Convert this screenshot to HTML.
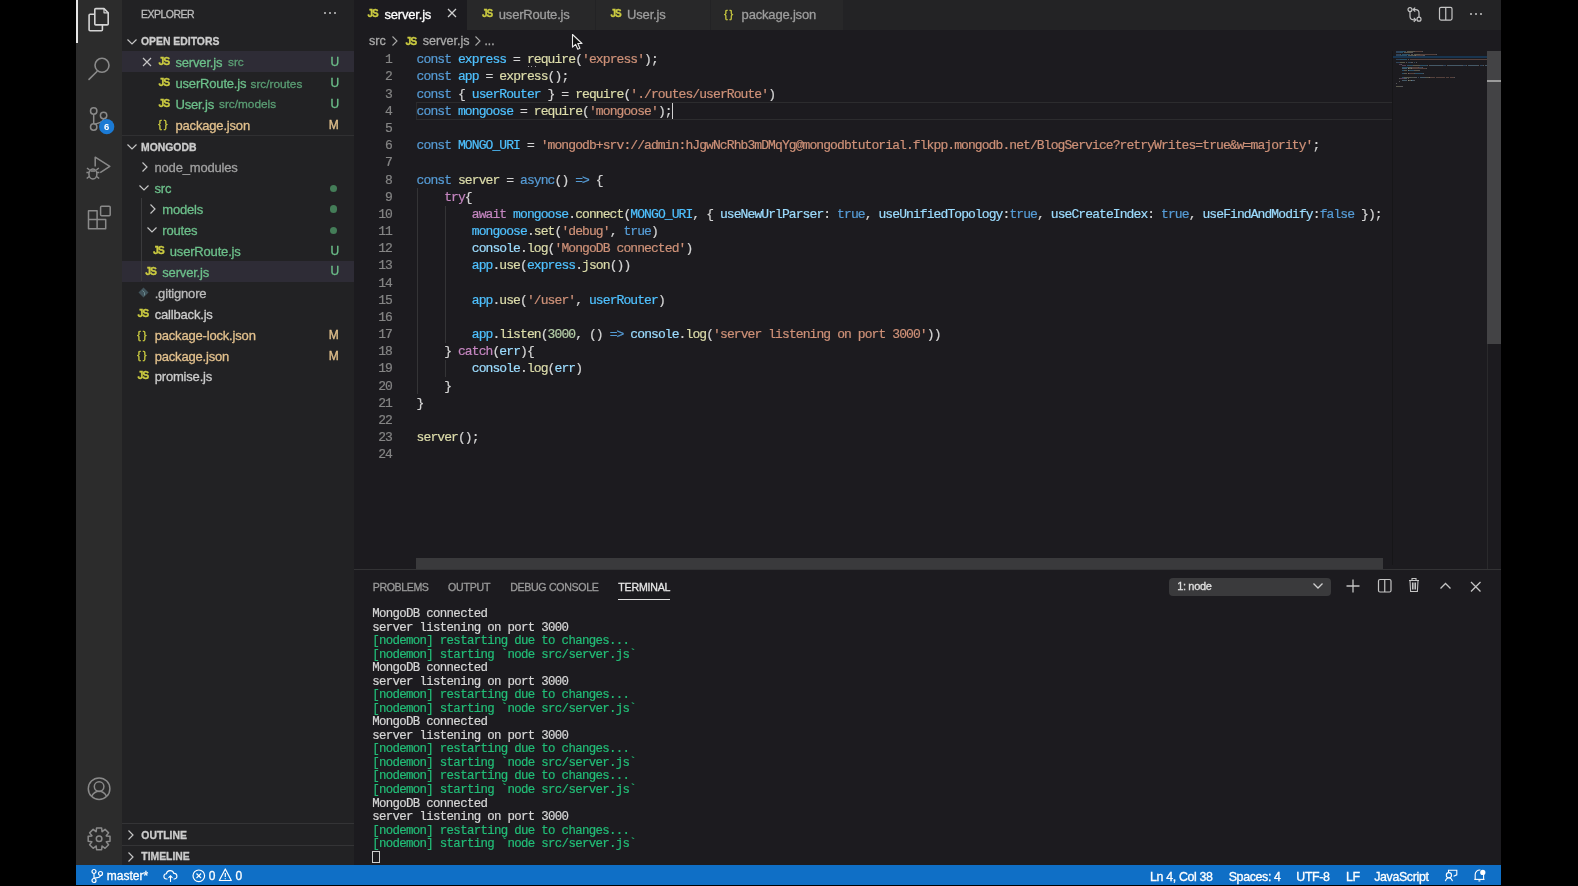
<!DOCTYPE html>
<html><head><meta charset="utf-8"><style>
*{margin:0;padding:0;box-sizing:border-box}
html,body{width:1578px;height:886px;overflow:hidden;background:#000}
body{position:relative;will-change:transform;font-family:"Liberation Sans",sans-serif}
.a{position:absolute}
.ui{font-family:"Liberation Sans",sans-serif;white-space:pre;-webkit-text-stroke-width:0.3px}
.mono{font-family:"Liberation Mono",monospace;white-space:pre;-webkit-text-stroke-width:0.2px}
.kw{color:#569cd6} .var{color:#4fc1ff} .prop{color:#9cdcfe} .fn{color:#dcdcaa}
.str{color:#ce9178} .ctrl{color:#c586c0} .num{color:#b5cea8} .pun{color:#d4d4d4}
.js{font-family:"Liberation Sans",sans-serif;font-weight:bold;color:#cbcb41;font-size:9px;letter-spacing:-0.3px}
</style></head>
<body>
<div class="a" style="left:76px;top:0px;width:46px;height:865px;background:#2c2c2c;"></div><div class="a" style="left:76px;top:0px;width:2px;height:43px;background:#e8e8e8;"></div><div class="a" style="left:122px;top:0px;width:232px;height:865px;background:#222224;"></div><div class="a" style="left:354px;top:0px;width:1147px;height:865px;background:#1c1b1f;"></div><div class="a" style="left:76px;top:865px;width:1425px;height:20px;background:#0f6fc6;"></div><svg class="a" style="left:76px;top:0px;" width="46" height="43" viewBox="0 0 46 43"><g fill="none" stroke="#d4d4d4" stroke-width="1.6" stroke-linejoin="round">
<path d="M19.8 8.6 h8.2 l4.2 4.2 v11.1 a1 1 0 0 1 -1 1 h-11.4 a1 1 0 0 1 -1 -1 v-14.3 a1 1 0 0 1 1 -1 z"/>
<path d="M18.8 14.3 h-4.7 a1 1 0 0 0 -1 1 v14.4 a1 1 0 0 0 1 1 h11.3 a1 1 0 0 0 1 -1 v-4.8"/>
<path d="M28 8.6 v4.2 h4.2" stroke-width="1.2"/>
</g></svg><svg class="a" style="left:76px;top:45px;" width="46" height="45" viewBox="0 0 46 45"><g fill="none" stroke="#8a8a8a" stroke-width="1.6">
<circle cx="26" cy="20.3" r="7"/><path d="M21 26.5 L13 34.4" stroke-linecap="round"/></g></svg><svg class="a" style="left:76px;top:95px;" width="46" height="45" viewBox="0 0 46 45"><g fill="none" stroke="#8a8a8a" stroke-width="1.5">
<circle cx="17.7" cy="16" r="3.2"/><circle cx="27.6" cy="20.5" r="3.2"/><circle cx="17.7" cy="32" r="3.2"/>
<path d="M17.7 19.2 V28.8"/><path d="M27.6 23.7 c0 4 -6 4 -9 6"/></g>
<circle cx="30.7" cy="31.7" r="7.6" fill="#1b7ad4"/>
<text x="30.7" y="35.2" font-family="Liberation Sans" font-weight="bold" font-size="9.5" fill="#fff" text-anchor="middle">6</text></svg><svg class="a" style="left:76px;top:145px;" width="46" height="45" viewBox="0 0 46 45"><g fill="none" stroke="#8a8a8a" stroke-width="1.5" stroke-linejoin="round">
<path d="M19.2 21.5 V12.2 L33.8 21.4 L24.2 27.6"/>
<ellipse cx="16.9" cy="29" rx="4" ry="5"/><path d="M12.9 27.5 h-2.5 M20.9 27.5 h2.5 M13.2 31.5 l-2.5 2 M20.6 31.5 l2.5 2 M13.5 25 l-2.5 -2 M20.3 25 l2.5 -2 M14.5 26 h4.8"/></g></svg><svg class="a" style="left:76px;top:200px;" width="46" height="35" viewBox="0 0 46 35"><g fill="none" stroke="#8a8a8a" stroke-width="1.5" stroke-linejoin="round">
<path d="M12.5 10.8 h8.6 v8.6 h8.6 v9.4 h-17.2 z M12.5 19.4 h8.6 v9.4"/>
<rect x="24.6" y="6.2" width="9.6" height="9.6" rx="1"/></g></svg><svg class="a" style="left:76px;top:765px;" width="46" height="48" viewBox="0 0 46 48"><g fill="none" stroke="#8a8a8a" stroke-width="1.5">
<circle cx="23.1" cy="23.7" r="10.8"/><circle cx="23.1" cy="21.6" r="4.8"/>
<path d="M15.6 31.3 c2 -3.5 4.5 -5 7.5 -5 c3 0 5.5 1.5 7.5 5"/></g></svg><svg class="a" style="left:76px;top:815px;" width="46" height="48" viewBox="0 0 46 48"><g fill="none" stroke="#8a8a8a" stroke-width="1.5" stroke-linejoin="round">
<path d="M34.01 21.28 L34.01 26.32 L30.33 26.72 L30.28 26.85 L32.60 29.74 L29.04 33.30 L26.15 30.98 L26.02 31.03 L25.62 34.71 L20.58 34.71 L20.18 31.03 L20.05 30.98 L17.16 33.30 L13.60 29.74 L15.92 26.85 L15.87 26.72 L12.19 26.32 L12.19 21.28 L15.87 20.88 L15.92 20.75 L13.60 17.86 L17.16 14.30 L20.05 16.62 L20.18 16.57 L20.58 12.89 L25.62 12.89 L26.02 16.57 L26.15 16.62 L29.04 14.30 L32.60 17.86 L30.28 20.75 L30.33 20.88Z"/><circle cx="23.1" cy="23.8" r="2.8"/></g></svg><div class="a ui" style="left:141px;top:8.72px;font-size:10.5px;line-height:10.5px;color:#bbbbbb;letter-spacing:-0.5px">EXPLORER</div><div class="a" style="left:323.5px;top:12.2px;width:2px;height:2px;background:#c5c5c5;border-radius:1px"></div><div class="a" style="left:328.5px;top:12.2px;width:2px;height:2px;background:#c5c5c5;border-radius:1px"></div><div class="a" style="left:333.5px;top:12.2px;width:2px;height:2px;background:#c5c5c5;border-radius:1px"></div><svg class="a" style="left:125.5px;top:35.5px;" width="12" height="12" viewBox="0 0 12 12"><path d="M1.5 3.5 L6 8 L10.5 3.5" fill="none" stroke="#c5c5c5" stroke-width="1.2"/></svg><div class="a ui" style="left:141px;top:36.97px;font-size:10.4px;line-height:10.4px;color:#cccccc;font-weight:bold;">OPEN EDITORS</div><div class="a" style="left:122px;top:51px;width:232px;height:21.4px;background:#2e2c36;"></div><svg class="a" style="left:141px;top:56px;" width="12" height="12" viewBox="0 0 12 12"><path d="M2 2 L10 10 M10 2 L2 10" stroke="#c5c5c5" stroke-width="1.2"/></svg><div class="a ui" style="left:158.5px;top:55.72px;font-size:10.5px;line-height:10.5px;color:#cbcb41;font-weight:bold;letter-spacing:-1px">JS</div><div class="a ui" style="left:175.5px;top:56.27px;font-size:13px;line-height:13px;color:#6cbf8a;letter-spacing:-0.18px">server.js</div><div class="a ui" style="left:330.5px;top:55.77px;font-size:12px;line-height:12px;color:#6cbf8a;">U</div><div class="a ui" style="left:158.5px;top:76.92px;font-size:10.5px;line-height:10.5px;color:#cbcb41;font-weight:bold;letter-spacing:-1px">JS</div><div class="a ui" style="left:175.5px;top:77.47px;font-size:13px;line-height:13px;color:#6cbf8a;letter-spacing:-0.18px">userRoute.js</div><div class="a ui" style="left:330.5px;top:76.97px;font-size:12px;line-height:12px;color:#6cbf8a;">U</div><div class="a ui" style="left:158.5px;top:97.72px;font-size:10.5px;line-height:10.5px;color:#cbcb41;font-weight:bold;letter-spacing:-1px">JS</div><div class="a ui" style="left:175.5px;top:98.27px;font-size:13px;line-height:13px;color:#6cbf8a;letter-spacing:-0.18px">User.js</div><div class="a ui" style="left:330.5px;top:97.77px;font-size:12px;line-height:12px;color:#6cbf8a;">U</div><div class="a ui" style="left:158px;top:118.82px;font-size:11.5px;line-height:11.5px;color:#cbcb41;letter-spacing:-0.6px">{ }</div><div class="a ui" style="left:175.5px;top:119.07px;font-size:13px;line-height:13px;color:#e2c08d;letter-spacing:-0.18px">package.json</div><div class="a ui" style="left:328.7px;top:118.57px;font-size:12px;line-height:12px;color:#e2c08d;">M</div><div class="a ui" style="left:228px;top:57.37px;font-size:11.8px;line-height:11.8px;color:#5a9e74;">src</div><div class="a ui" style="left:250.5px;top:78.57px;font-size:11.8px;line-height:11.8px;color:#5a9e74;">src/routes</div><div class="a ui" style="left:219px;top:99.37px;font-size:11.8px;line-height:11.8px;color:#5a9e74;">src/models</div><div class="a" style="left:122px;top:135px;width:232px;height:1px;background:#303032;"></div><svg class="a" style="left:125.5px;top:141px;" width="12" height="12" viewBox="0 0 12 12"><path d="M1.5 3.5 L6 8 L10.5 3.5" fill="none" stroke="#c5c5c5" stroke-width="1.2"/></svg><div class="a ui" style="left:141px;top:142.87px;font-size:10.4px;line-height:10.4px;color:#cccccc;font-weight:bold;">MONGODB</div><div class="a" style="left:122px;top:261px;width:232px;height:21.2px;background:#2e2c36;"></div><div class="a" style="left:141.3px;top:198px;width:1px;height:83px;background:#3a3a3c;"></div><svg class="a" style="left:139px;top:161.0px;" width="12" height="12" viewBox="0 0 12 12"><path d="M3.5 1.5 L8 6 L3.5 10.5" fill="none" stroke="#c5c5c5" stroke-width="1.2"/></svg><div class="a ui" style="left:154.5px;top:161.07px;font-size:13px;line-height:13px;color:#a0a0a0;letter-spacing:-0.18px">node_modules</div><svg class="a" style="left:138px;top:182.4px;" width="12" height="12" viewBox="0 0 12 12"><path d="M1.5 3.5 L6 8 L10.5 3.5" fill="none" stroke="#c5c5c5" stroke-width="1.2"/></svg><div class="a ui" style="left:154.5px;top:182.47px;font-size:13px;line-height:13px;color:#6cbf8a;letter-spacing:-0.18px">src</div><div class="a" style="left:329.9px;top:184.6px;width:7.6px;height:7.6px;border-radius:50%;background:#447d58"></div><svg class="a" style="left:147px;top:203.0px;" width="12" height="12" viewBox="0 0 12 12"><path d="M3.5 1.5 L8 6 L3.5 10.5" fill="none" stroke="#c5c5c5" stroke-width="1.2"/></svg><div class="a ui" style="left:162.3px;top:203.07px;font-size:13px;line-height:13px;color:#6cbf8a;letter-spacing:-0.18px">models</div><div class="a" style="left:329.9px;top:205.2px;width:7.6px;height:7.6px;border-radius:50%;background:#447d58"></div><svg class="a" style="left:146px;top:224.3px;" width="12" height="12" viewBox="0 0 12 12"><path d="M1.5 3.5 L6 8 L10.5 3.5" fill="none" stroke="#c5c5c5" stroke-width="1.2"/></svg><div class="a ui" style="left:162.3px;top:224.37px;font-size:13px;line-height:13px;color:#6cbf8a;letter-spacing:-0.18px">routes</div><div class="a" style="left:329.9px;top:226.5px;width:7.6px;height:7.6px;border-radius:50%;background:#447d58"></div><div class="a ui" style="left:153px;top:244.92px;font-size:10.5px;line-height:10.5px;color:#cbcb41;font-weight:bold;letter-spacing:-1px">JS</div><div class="a ui" style="left:169.8px;top:244.87px;font-size:13px;line-height:13px;color:#6cbf8a;letter-spacing:-0.18px">userRoute.js</div><div class="a ui" style="left:330.5px;top:244.77px;font-size:12px;line-height:12px;color:#6cbf8a;">U</div><div class="a ui" style="left:145.2px;top:265.62px;font-size:10.5px;line-height:10.5px;color:#cbcb41;font-weight:bold;letter-spacing:-1px">JS</div><div class="a ui" style="left:162.3px;top:265.57px;font-size:13px;line-height:13px;color:#6cbf8a;letter-spacing:-0.18px">server.js</div><div class="a ui" style="left:330.5px;top:265.47px;font-size:12px;line-height:12px;color:#6cbf8a;">U</div><svg class="a" style="left:137.5px;top:287.0px;" width="12" height="12" viewBox="0 0 12 12"><path d="M5.5 0.5 L10.5 5.5 L5.5 10.5 L0.5 5.5 Z" fill="#41535b"/><path d="M4.5 3.5 L6.5 5.5 L6.5 8.5" stroke="#6a8a8f" stroke-width="1" fill="none"/></svg><div class="a ui" style="left:154.7px;top:287.07px;font-size:13px;line-height:13px;color:#bbbbbb;letter-spacing:-0.18px">.gitignore</div><div class="a ui" style="left:137.5px;top:307.92px;font-size:10.5px;line-height:10.5px;color:#cbcb41;font-weight:bold;letter-spacing:-1px">JS</div><div class="a ui" style="left:154.7px;top:307.87px;font-size:13px;line-height:13px;color:#cccccc;letter-spacing:-0.18px">callback.js</div><div class="a ui" style="left:137px;top:329.52px;font-size:11.5px;line-height:11.5px;color:#cbcb41;letter-spacing:-0.6px">{ }</div><div class="a ui" style="left:154.7px;top:328.87px;font-size:13px;line-height:13px;color:#e2c08d;letter-spacing:-0.18px">package-lock.json</div><div class="a ui" style="left:328.7px;top:328.77px;font-size:12px;line-height:12px;color:#e2c08d;">M</div><div class="a ui" style="left:137px;top:350.32px;font-size:11.5px;line-height:11.5px;color:#cbcb41;letter-spacing:-0.6px">{ }</div><div class="a ui" style="left:154.7px;top:349.67px;font-size:13px;line-height:13px;color:#e2c08d;letter-spacing:-0.18px">package.json</div><div class="a ui" style="left:328.7px;top:349.57px;font-size:12px;line-height:12px;color:#e2c08d;">M</div><div class="a ui" style="left:137.5px;top:370.12px;font-size:10.5px;line-height:10.5px;color:#cbcb41;font-weight:bold;letter-spacing:-1px">JS</div><div class="a ui" style="left:154.7px;top:370.07px;font-size:13px;line-height:13px;color:#cccccc;letter-spacing:-0.18px">promise.js</div><div class="a" style="left:122px;top:823px;width:232px;height:1px;background:#343436;"></div><div class="a" style="left:122px;top:845px;width:232px;height:1px;background:#343436;"></div><svg class="a" style="left:125px;top:829px;" width="12" height="12" viewBox="0 0 12 12"><path d="M3.5 1.5 L8 6 L3.5 10.5" fill="none" stroke="#c5c5c5" stroke-width="1.2"/></svg><div class="a ui" style="left:141.3px;top:830.77px;font-size:10.4px;line-height:10.4px;color:#cccccc;font-weight:bold;">OUTLINE</div><svg class="a" style="left:125px;top:850.5px;" width="12" height="12" viewBox="0 0 12 12"><path d="M3.5 1.5 L8 6 L3.5 10.5" fill="none" stroke="#c5c5c5" stroke-width="1.2"/></svg><div class="a ui" style="left:141.3px;top:851.97px;font-size:10.4px;line-height:10.4px;color:#cccccc;font-weight:bold;">TIMELINE</div><div class="a" style="left:354px;top:0px;width:1147px;height:30px;background:#232325;"></div><div class="a" style="left:354px;top:0px;width:113px;height:30px;background:#1c1b1f;"></div><div class="a" style="left:467px;top:0px;width:128px;height:30px;background:#282829;"></div><div class="a" style="left:596px;top:0px;width:114px;height:30px;background:#282829;"></div><div class="a" style="left:711px;top:0px;width:132px;height:30px;background:#282829;"></div><div class="a ui" style="left:367.5px;top:9.18px;font-size:10px;line-height:10px;color:#cbcb41;font-weight:bold;letter-spacing:-1px">JS</div><div class="a ui" style="left:384.4px;top:7.67px;font-size:13px;line-height:13px;color:#ffffff;letter-spacing:-0.18px">server.js</div><svg class="a" style="left:446px;top:7px;" width="12" height="12" viewBox="0 0 12 12"><path d="M2 2 L10 10 M10 2 L2 10" stroke="#d0d0d0" stroke-width="1.3"/></svg><div class="a ui" style="left:482px;top:9.18px;font-size:10px;line-height:10px;color:#cbcb41;font-weight:bold;letter-spacing:-1px">JS</div><div class="a ui" style="left:498.8px;top:7.67px;font-size:13px;line-height:13px;color:#9d9d9d;letter-spacing:-0.18px">userRoute.js</div><div class="a ui" style="left:610.4px;top:9.18px;font-size:10px;line-height:10px;color:#cbcb41;font-weight:bold;letter-spacing:-1px">JS</div><div class="a ui" style="left:627.1px;top:7.67px;font-size:13px;line-height:13px;color:#9d9d9d;letter-spacing:-0.18px">User.js</div><div class="a ui" style="left:724px;top:8.67px;font-size:11px;line-height:11px;color:#cbcb41;letter-spacing:-0.6px">{ }</div><div class="a ui" style="left:741.6px;top:7.67px;font-size:13px;line-height:13px;color:#9d9d9d;letter-spacing:-0.18px">package.json</div><svg class="a" style="left:1405px;top:5px;" width="20" height="20" viewBox="0 0 20 20"><g fill="none" stroke="#c5c5c5" stroke-width="1.2">
<circle cx="5" cy="4.6" r="2"/><circle cx="14" cy="14.2" r="2"/>
<path d="M5 6.6 V11.3 q0 3.5 3.5 3.5 h1.8"/><path d="M8.8 12.8 l2 2 l-2 2"/>
<path d="M14 12.2 V8 q0 -3.4 -3.5 -3.4 h-1.8"/><path d="M10.2 2.6 l-2 2 l2 2"/></g></svg><svg class="a" style="left:1437px;top:5px;" width="18" height="18" viewBox="0 0 18 18"><g fill="none" stroke="#c5c5c5" stroke-width="1.2"><rect x="2.5" y="2.3" width="12.5" height="12.8" rx="1.5"/><path d="M8.75 2.3 V15.1"/></g></svg><div class="a" style="left:1470px;top:12.8px;width:2px;height:2px;background:#c5c5c5;border-radius:1px"></div><div class="a" style="left:1475px;top:12.8px;width:2px;height:2px;background:#c5c5c5;border-radius:1px"></div><div class="a" style="left:1480px;top:12.8px;width:2px;height:2px;background:#c5c5c5;border-radius:1px"></div><div class="a ui" style="left:369px;top:34.87px;font-size:12.6px;line-height:12.6px;color:#a9a9a9;">src</div><svg class="a" style="left:390px;top:35px;" width="10" height="12" viewBox="0 0 10 12"><path d="M2.5 1.5 L7 6 L2.5 10.5" fill="none" stroke="#a9a9a9" stroke-width="1.1"/></svg><div class="a ui" style="left:405.5px;top:35.72px;font-size:10.5px;line-height:10.5px;color:#cbcb41;font-weight:bold;letter-spacing:-1px">JS</div><div class="a ui" style="left:422.7px;top:34.87px;font-size:12.6px;line-height:12.6px;color:#a9a9a9;">server.js</div><svg class="a" style="left:473px;top:35px;" width="10" height="12" viewBox="0 0 10 12"><path d="M2.5 1.5 L7 6 L2.5 10.5" fill="none" stroke="#a9a9a9" stroke-width="1.1"/></svg><div class="a ui" style="left:484.5px;top:35.17px;font-size:12px;line-height:12px;color:#a9a9a9;">...</div><div class="a" style="left:416px;top:102.01px;width:976px;height:17.6px;background:transparent;border-top:1px solid #2c2c2e;border-bottom:1px solid #2c2c2e;border-left:1px solid #2a2a2c"></div><div class="a" style="left:417.1px;top:188.36px;width:1px;height:206.04000000000002px;background:#343436;"></div><div class="a" style="left:444.66px;top:205.53000000000003px;width:1px;height:137.36px;background:#343436;"></div><div class="a" style="left:444.66px;top:360.06000000000006px;width:1px;height:17.17px;background:#343436;"></div><div class="a mono" style="left:352px;width:40px;text-align:right;top:53.31px;font-size:13.0px;line-height:13.0px;letter-spacing:-0.910px;color:#858585">1</div><div class="a mono" style="left:352px;width:40px;text-align:right;top:70.48px;font-size:13.0px;line-height:13.0px;letter-spacing:-0.910px;color:#858585">2</div><div class="a mono" style="left:352px;width:40px;text-align:right;top:87.65px;font-size:13.0px;line-height:13.0px;letter-spacing:-0.910px;color:#858585">3</div><div class="a mono" style="left:352px;width:40px;text-align:right;top:104.82px;font-size:13.0px;line-height:13.0px;letter-spacing:-0.910px;color:#858585">4</div><div class="a mono" style="left:352px;width:40px;text-align:right;top:121.99px;font-size:13.0px;line-height:13.0px;letter-spacing:-0.910px;color:#858585">5</div><div class="a mono" style="left:352px;width:40px;text-align:right;top:139.16px;font-size:13.0px;line-height:13.0px;letter-spacing:-0.910px;color:#858585">6</div><div class="a mono" style="left:352px;width:40px;text-align:right;top:156.33px;font-size:13.0px;line-height:13.0px;letter-spacing:-0.910px;color:#858585">7</div><div class="a mono" style="left:352px;width:40px;text-align:right;top:173.50px;font-size:13.0px;line-height:13.0px;letter-spacing:-0.910px;color:#858585">8</div><div class="a mono" style="left:352px;width:40px;text-align:right;top:190.67px;font-size:13.0px;line-height:13.0px;letter-spacing:-0.910px;color:#858585">9</div><div class="a mono" style="left:352px;width:40px;text-align:right;top:207.84px;font-size:13.0px;line-height:13.0px;letter-spacing:-0.910px;color:#858585">10</div><div class="a mono" style="left:352px;width:40px;text-align:right;top:225.01px;font-size:13.0px;line-height:13.0px;letter-spacing:-0.910px;color:#858585">11</div><div class="a mono" style="left:352px;width:40px;text-align:right;top:242.18px;font-size:13.0px;line-height:13.0px;letter-spacing:-0.910px;color:#858585">12</div><div class="a mono" style="left:352px;width:40px;text-align:right;top:259.35px;font-size:13.0px;line-height:13.0px;letter-spacing:-0.910px;color:#858585">13</div><div class="a mono" style="left:352px;width:40px;text-align:right;top:276.52px;font-size:13.0px;line-height:13.0px;letter-spacing:-0.910px;color:#858585">14</div><div class="a mono" style="left:352px;width:40px;text-align:right;top:293.69px;font-size:13.0px;line-height:13.0px;letter-spacing:-0.910px;color:#858585">15</div><div class="a mono" style="left:352px;width:40px;text-align:right;top:310.86px;font-size:13.0px;line-height:13.0px;letter-spacing:-0.910px;color:#858585">16</div><div class="a mono" style="left:352px;width:40px;text-align:right;top:328.03px;font-size:13.0px;line-height:13.0px;letter-spacing:-0.910px;color:#858585">17</div><div class="a mono" style="left:352px;width:40px;text-align:right;top:345.20px;font-size:13.0px;line-height:13.0px;letter-spacing:-0.910px;color:#858585">18</div><div class="a mono" style="left:352px;width:40px;text-align:right;top:362.37px;font-size:13.0px;line-height:13.0px;letter-spacing:-0.910px;color:#858585">19</div><div class="a mono" style="left:352px;width:40px;text-align:right;top:379.54px;font-size:13.0px;line-height:13.0px;letter-spacing:-0.910px;color:#858585">20</div><div class="a mono" style="left:352px;width:40px;text-align:right;top:396.71px;font-size:13.0px;line-height:13.0px;letter-spacing:-0.910px;color:#858585">21</div><div class="a mono" style="left:352px;width:40px;text-align:right;top:413.88px;font-size:13.0px;line-height:13.0px;letter-spacing:-0.910px;color:#858585">22</div><div class="a mono" style="left:352px;width:40px;text-align:right;top:431.05px;font-size:13.0px;line-height:13.0px;letter-spacing:-0.910px;color:#858585">23</div><div class="a mono" style="left:352px;width:40px;text-align:right;top:448.22px;font-size:13.0px;line-height:13.0px;letter-spacing:-0.910px;color:#858585">24</div><div class="a mono" style="left:416.6px;top:53.31px;font-size:13.0px;line-height:13.0px;letter-spacing:-0.910px;color:#d4d4d4"><span class="kw">const</span> <span class="var">express</span><span class="pun"> = </span><span class="fn">require</span><span class="pun">(</span><span class="str">&#x27;express&#x27;</span><span class="pun">);</span></div><div class="a mono" style="left:416.6px;top:70.48px;font-size:13.0px;line-height:13.0px;letter-spacing:-0.910px;color:#d4d4d4"><span class="kw">const</span> <span class="var">app</span><span class="pun"> = </span><span class="fn">express</span><span class="pun">();</span></div><div class="a mono" style="left:416.6px;top:87.65px;font-size:13.0px;line-height:13.0px;letter-spacing:-0.910px;color:#d4d4d4"><span class="kw">const</span><span class="pun"> { </span><span class="var">userRouter</span><span class="pun"> } = </span><span class="fn">require</span><span class="pun">(</span><span class="str">&#x27;./routes/userRoute&#x27;</span><span class="pun">)</span></div><div class="a mono" style="left:416.6px;top:104.82px;font-size:13.0px;line-height:13.0px;letter-spacing:-0.910px;color:#d4d4d4"><span class="kw">const</span> <span class="var">mongoose</span><span class="pun"> = </span><span class="fn">require</span><span class="pun">(</span><span class="str">&#x27;mongoose&#x27;</span><span class="pun">);</span></div><div class="a mono" style="left:416.6px;top:139.16px;font-size:13.0px;line-height:13.0px;letter-spacing:-0.910px;color:#d4d4d4"><span class="kw">const</span> <span class="var">MONGO_URI</span><span class="pun"> = </span><span class="str">&#x27;mongodb+srv://admin:hJgwNcRhb3mDMqYg@mongodbtutorial.flkpp.mongodb.net/BlogService?retryWrites=true&amp;w=majority&#x27;</span><span class="pun">;</span></div><div class="a mono" style="left:416.6px;top:173.50px;font-size:13.0px;line-height:13.0px;letter-spacing:-0.910px;color:#d4d4d4"><span class="kw">const</span> <span class="fn">server</span><span class="pun"> = </span><span class="kw">async</span><span class="pun">() </span><span class="kw">=&gt;</span><span class="pun"> {</span></div><div class="a mono" style="left:416.6px;top:190.67px;font-size:13.0px;line-height:13.0px;letter-spacing:-0.910px;color:#d4d4d4">    <span class="ctrl">try</span><span class="pun">{</span></div><div class="a mono" style="left:416.6px;top:207.84px;font-size:13.0px;line-height:13.0px;letter-spacing:-0.910px;color:#d4d4d4">        <span class="ctrl">await</span> <span class="var">mongoose</span><span class="pun">.</span><span class="fn">connect</span><span class="pun">(</span><span class="var">MONGO_URI</span><span class="pun">, { </span><span class="prop">useNewUrlParser</span><span class="pun">: </span><span class="kw">true</span><span class="pun">, </span><span class="prop">useUnifiedTopology</span><span class="pun">:</span><span class="kw">true</span><span class="pun">, </span><span class="prop">useCreateIndex</span><span class="pun">: </span><span class="kw">true</span><span class="pun">, </span><span class="prop">useFindAndModify</span><span class="pun">:</span><span class="kw">false</span><span class="pun"> });</span></div><div class="a mono" style="left:416.6px;top:225.01px;font-size:13.0px;line-height:13.0px;letter-spacing:-0.910px;color:#d4d4d4">        <span class="var">mongoose</span><span class="pun">.</span><span class="fn">set</span><span class="pun">(</span><span class="str">&#x27;debug&#x27;</span><span class="pun">, </span><span class="kw">true</span><span class="pun">)</span></div><div class="a mono" style="left:416.6px;top:242.18px;font-size:13.0px;line-height:13.0px;letter-spacing:-0.910px;color:#d4d4d4">        <span class="prop">console</span><span class="pun">.</span><span class="fn">log</span><span class="pun">(</span><span class="str">&#x27;MongoDB connected&#x27;</span><span class="pun">)</span></div><div class="a mono" style="left:416.6px;top:259.35px;font-size:13.0px;line-height:13.0px;letter-spacing:-0.910px;color:#d4d4d4">        <span class="var">app</span><span class="pun">.</span><span class="fn">use</span><span class="pun">(</span><span class="var">express</span><span class="pun">.</span><span class="fn">json</span><span class="pun">())</span></div><div class="a mono" style="left:416.6px;top:293.69px;font-size:13.0px;line-height:13.0px;letter-spacing:-0.910px;color:#d4d4d4">        <span class="var">app</span><span class="pun">.</span><span class="fn">use</span><span class="pun">(</span><span class="str">&#x27;/user&#x27;</span><span class="pun">, </span><span class="var">userRouter</span><span class="pun">)</span></div><div class="a mono" style="left:416.6px;top:328.03px;font-size:13.0px;line-height:13.0px;letter-spacing:-0.910px;color:#d4d4d4">        <span class="var">app</span><span class="pun">.</span><span class="fn">listen</span><span class="pun">(</span><span class="num">3000</span><span class="pun">, () </span><span class="kw">=&gt;</span> <span class="prop">console</span><span class="pun">.</span><span class="fn">log</span><span class="pun">(</span><span class="str">&#x27;server listening on port 3000&#x27;</span><span class="pun">))</span></div><div class="a mono" style="left:416.6px;top:345.20px;font-size:13.0px;line-height:13.0px;letter-spacing:-0.910px;color:#d4d4d4">    <span class="pun">} </span><span class="ctrl">catch</span><span class="pun">(</span><span class="prop">err</span><span class="pun">){</span></div><div class="a mono" style="left:416.6px;top:362.37px;font-size:13.0px;line-height:13.0px;letter-spacing:-0.910px;color:#d4d4d4">        <span class="prop">console</span><span class="pun">.</span><span class="fn">log</span><span class="pun">(</span><span class="prop">err</span><span class="pun">)</span></div><div class="a mono" style="left:416.6px;top:379.54px;font-size:13.0px;line-height:13.0px;letter-spacing:-0.910px;color:#d4d4d4">    <span class="pun">}</span></div><div class="a mono" style="left:416.6px;top:396.71px;font-size:13.0px;line-height:13.0px;letter-spacing:-0.910px;color:#d4d4d4"><span class="pun">}</span></div><div class="a mono" style="left:416.6px;top:431.05px;font-size:13.0px;line-height:13.0px;letter-spacing:-0.910px;color:#d4d4d4"><span class="fn">server</span><span class="pun">();</span></div><div class="a" style="left:672px;top:103.01px;width:1.2px;height:16px;background:#d0d0d0;"></div><div class="a" style="left:527.5px;top:65.8px;width:1.3px;height:1.3px;background:#9a9a9a;"></div><div class="a" style="left:531.1px;top:65.8px;width:1.3px;height:1.3px;background:#9a9a9a;"></div><div class="a" style="left:534.7px;top:65.8px;width:1.3px;height:1.3px;background:#9a9a9a;"></div><div class="a" style="left:1392px;top:51px;width:1px;height:514px;background:#161618;"></div><div class="a" style="left:1393px;top:55.96px;width:94px;height:2px;background:#183550;"></div><div class="a" style="left:1395.80px;top:50.60px;width:3.90px;height:1px;background:#569cd6;opacity:0.32"></div><div class="a" style="left:1400.48px;top:50.60px;width:5.46px;height:1px;background:#4fc1ff;opacity:0.32"></div><div class="a" style="left:1406.72px;top:50.60px;width:0.78px;height:1px;background:#d4d4d4;opacity:0.32"></div><div class="a" style="left:1408.28px;top:50.60px;width:5.46px;height:1px;background:#dcdcaa;opacity:0.32"></div><div class="a" style="left:1413.74px;top:50.60px;width:0.78px;height:1px;background:#d4d4d4;opacity:0.32"></div><div class="a" style="left:1414.52px;top:50.60px;width:7.02px;height:1px;background:#ce9178;opacity:0.32"></div><div class="a" style="left:1421.54px;top:50.60px;width:1.56px;height:1px;background:#d4d4d4;opacity:0.32"></div><div class="a" style="left:1395.80px;top:52.22px;width:3.90px;height:1px;background:#569cd6;opacity:0.32"></div><div class="a" style="left:1400.48px;top:52.22px;width:2.34px;height:1px;background:#4fc1ff;opacity:0.32"></div><div class="a" style="left:1403.60px;top:52.22px;width:0.78px;height:1px;background:#d4d4d4;opacity:0.32"></div><div class="a" style="left:1405.16px;top:52.22px;width:5.46px;height:1px;background:#dcdcaa;opacity:0.32"></div><div class="a" style="left:1410.62px;top:52.22px;width:2.34px;height:1px;background:#d4d4d4;opacity:0.32"></div><div class="a" style="left:1395.80px;top:53.84px;width:3.90px;height:1px;background:#569cd6;opacity:0.32"></div><div class="a" style="left:1400.48px;top:53.84px;width:0.78px;height:1px;background:#d4d4d4;opacity:0.32"></div><div class="a" style="left:1402.04px;top:53.84px;width:7.80px;height:1px;background:#4fc1ff;opacity:0.32"></div><div class="a" style="left:1410.62px;top:53.84px;width:0.78px;height:1px;background:#d4d4d4;opacity:0.32"></div><div class="a" style="left:1412.18px;top:53.84px;width:0.78px;height:1px;background:#d4d4d4;opacity:0.32"></div><div class="a" style="left:1413.74px;top:53.84px;width:5.46px;height:1px;background:#dcdcaa;opacity:0.32"></div><div class="a" style="left:1419.20px;top:53.84px;width:0.78px;height:1px;background:#d4d4d4;opacity:0.32"></div><div class="a" style="left:1419.98px;top:53.84px;width:15.60px;height:1px;background:#ce9178;opacity:0.32"></div><div class="a" style="left:1435.58px;top:53.84px;width:0.78px;height:1px;background:#d4d4d4;opacity:0.32"></div><div class="a" style="left:1395.80px;top:55.46px;width:3.90px;height:1px;background:#569cd6;opacity:0.32"></div><div class="a" style="left:1400.48px;top:55.46px;width:6.24px;height:1px;background:#4fc1ff;opacity:0.32"></div><div class="a" style="left:1407.50px;top:55.46px;width:0.78px;height:1px;background:#d4d4d4;opacity:0.32"></div><div class="a" style="left:1409.06px;top:55.46px;width:5.46px;height:1px;background:#dcdcaa;opacity:0.32"></div><div class="a" style="left:1414.52px;top:55.46px;width:0.78px;height:1px;background:#d4d4d4;opacity:0.32"></div><div class="a" style="left:1415.30px;top:55.46px;width:7.80px;height:1px;background:#ce9178;opacity:0.32"></div><div class="a" style="left:1423.10px;top:55.46px;width:1.56px;height:1px;background:#d4d4d4;opacity:0.32"></div><div class="a" style="left:1395.80px;top:58.70px;width:3.90px;height:1px;background:#569cd6;opacity:0.32"></div><div class="a" style="left:1400.48px;top:58.70px;width:7.02px;height:1px;background:#4fc1ff;opacity:0.32"></div><div class="a" style="left:1408.28px;top:58.70px;width:0.78px;height:1px;background:#d4d4d4;opacity:0.32"></div><div class="a" style="left:1409.84px;top:58.70px;width:77.16px;height:1px;background:#ce9178;opacity:0.32"></div><div class="a" style="left:1395.80px;top:61.94px;width:3.90px;height:1px;background:#569cd6;opacity:0.32"></div><div class="a" style="left:1400.48px;top:61.94px;width:4.68px;height:1px;background:#dcdcaa;opacity:0.32"></div><div class="a" style="left:1405.94px;top:61.94px;width:0.78px;height:1px;background:#d4d4d4;opacity:0.32"></div><div class="a" style="left:1407.50px;top:61.94px;width:3.90px;height:1px;background:#569cd6;opacity:0.32"></div><div class="a" style="left:1411.40px;top:61.94px;width:1.56px;height:1px;background:#d4d4d4;opacity:0.32"></div><div class="a" style="left:1413.74px;top:61.94px;width:1.56px;height:1px;background:#569cd6;opacity:0.32"></div><div class="a" style="left:1416.08px;top:61.94px;width:0.78px;height:1px;background:#d4d4d4;opacity:0.32"></div><div class="a" style="left:1398.92px;top:63.56px;width:2.34px;height:1px;background:#c586c0;opacity:0.32"></div><div class="a" style="left:1401.26px;top:63.56px;width:0.78px;height:1px;background:#d4d4d4;opacity:0.32"></div><div class="a" style="left:1402.04px;top:65.18px;width:3.90px;height:1px;background:#c586c0;opacity:0.32"></div><div class="a" style="left:1406.72px;top:65.18px;width:6.24px;height:1px;background:#4fc1ff;opacity:0.32"></div><div class="a" style="left:1412.96px;top:65.18px;width:0.78px;height:1px;background:#d4d4d4;opacity:0.32"></div><div class="a" style="left:1413.74px;top:65.18px;width:5.46px;height:1px;background:#dcdcaa;opacity:0.32"></div><div class="a" style="left:1419.20px;top:65.18px;width:0.78px;height:1px;background:#d4d4d4;opacity:0.32"></div><div class="a" style="left:1419.98px;top:65.18px;width:7.02px;height:1px;background:#4fc1ff;opacity:0.32"></div><div class="a" style="left:1427.00px;top:65.18px;width:0.78px;height:1px;background:#d4d4d4;opacity:0.32"></div><div class="a" style="left:1428.56px;top:65.18px;width:0.78px;height:1px;background:#d4d4d4;opacity:0.32"></div><div class="a" style="left:1430.12px;top:65.18px;width:11.70px;height:1px;background:#9cdcfe;opacity:0.32"></div><div class="a" style="left:1441.82px;top:65.18px;width:0.78px;height:1px;background:#d4d4d4;opacity:0.32"></div><div class="a" style="left:1443.38px;top:65.18px;width:3.12px;height:1px;background:#569cd6;opacity:0.32"></div><div class="a" style="left:1446.50px;top:65.18px;width:0.78px;height:1px;background:#d4d4d4;opacity:0.32"></div><div class="a" style="left:1448.06px;top:65.18px;width:14.04px;height:1px;background:#9cdcfe;opacity:0.32"></div><div class="a" style="left:1462.10px;top:65.18px;width:0.78px;height:1px;background:#d4d4d4;opacity:0.32"></div><div class="a" style="left:1462.88px;top:65.18px;width:3.12px;height:1px;background:#569cd6;opacity:0.32"></div><div class="a" style="left:1466.00px;top:65.18px;width:0.78px;height:1px;background:#d4d4d4;opacity:0.32"></div><div class="a" style="left:1467.56px;top:65.18px;width:10.92px;height:1px;background:#9cdcfe;opacity:0.32"></div><div class="a" style="left:1478.48px;top:65.18px;width:0.78px;height:1px;background:#d4d4d4;opacity:0.32"></div><div class="a" style="left:1480.04px;top:65.18px;width:3.12px;height:1px;background:#569cd6;opacity:0.32"></div><div class="a" style="left:1483.16px;top:65.18px;width:0.78px;height:1px;background:#d4d4d4;opacity:0.32"></div><div class="a" style="left:1484.72px;top:65.18px;width:2.28px;height:1px;background:#9cdcfe;opacity:0.32"></div><div class="a" style="left:1402.04px;top:66.80px;width:6.24px;height:1px;background:#4fc1ff;opacity:0.32"></div><div class="a" style="left:1408.28px;top:66.80px;width:0.78px;height:1px;background:#d4d4d4;opacity:0.32"></div><div class="a" style="left:1409.06px;top:66.80px;width:2.34px;height:1px;background:#dcdcaa;opacity:0.32"></div><div class="a" style="left:1411.40px;top:66.80px;width:0.78px;height:1px;background:#d4d4d4;opacity:0.32"></div><div class="a" style="left:1412.18px;top:66.80px;width:5.46px;height:1px;background:#ce9178;opacity:0.32"></div><div class="a" style="left:1417.64px;top:66.80px;width:0.78px;height:1px;background:#d4d4d4;opacity:0.32"></div><div class="a" style="left:1419.20px;top:66.80px;width:3.12px;height:1px;background:#569cd6;opacity:0.32"></div><div class="a" style="left:1422.32px;top:66.80px;width:0.78px;height:1px;background:#d4d4d4;opacity:0.32"></div><div class="a" style="left:1402.04px;top:68.42px;width:5.46px;height:1px;background:#9cdcfe;opacity:0.32"></div><div class="a" style="left:1407.50px;top:68.42px;width:0.78px;height:1px;background:#d4d4d4;opacity:0.32"></div><div class="a" style="left:1408.28px;top:68.42px;width:2.34px;height:1px;background:#dcdcaa;opacity:0.32"></div><div class="a" style="left:1410.62px;top:68.42px;width:0.78px;height:1px;background:#d4d4d4;opacity:0.32"></div><div class="a" style="left:1411.40px;top:68.42px;width:6.24px;height:1px;background:#ce9178;opacity:0.32"></div><div class="a" style="left:1418.42px;top:68.42px;width:7.80px;height:1px;background:#ce9178;opacity:0.32"></div><div class="a" style="left:1426.22px;top:68.42px;width:0.78px;height:1px;background:#d4d4d4;opacity:0.32"></div><div class="a" style="left:1402.04px;top:70.04px;width:2.34px;height:1px;background:#4fc1ff;opacity:0.32"></div><div class="a" style="left:1404.38px;top:70.04px;width:0.78px;height:1px;background:#d4d4d4;opacity:0.32"></div><div class="a" style="left:1405.16px;top:70.04px;width:2.34px;height:1px;background:#dcdcaa;opacity:0.32"></div><div class="a" style="left:1407.50px;top:70.04px;width:0.78px;height:1px;background:#d4d4d4;opacity:0.32"></div><div class="a" style="left:1408.28px;top:70.04px;width:5.46px;height:1px;background:#4fc1ff;opacity:0.32"></div><div class="a" style="left:1413.74px;top:70.04px;width:0.78px;height:1px;background:#d4d4d4;opacity:0.32"></div><div class="a" style="left:1414.52px;top:70.04px;width:3.12px;height:1px;background:#dcdcaa;opacity:0.32"></div><div class="a" style="left:1417.64px;top:70.04px;width:2.34px;height:1px;background:#d4d4d4;opacity:0.32"></div><div class="a" style="left:1402.04px;top:73.28px;width:2.34px;height:1px;background:#4fc1ff;opacity:0.32"></div><div class="a" style="left:1404.38px;top:73.28px;width:0.78px;height:1px;background:#d4d4d4;opacity:0.32"></div><div class="a" style="left:1405.16px;top:73.28px;width:2.34px;height:1px;background:#dcdcaa;opacity:0.32"></div><div class="a" style="left:1407.50px;top:73.28px;width:0.78px;height:1px;background:#d4d4d4;opacity:0.32"></div><div class="a" style="left:1408.28px;top:73.28px;width:5.46px;height:1px;background:#ce9178;opacity:0.32"></div><div class="a" style="left:1413.74px;top:73.28px;width:0.78px;height:1px;background:#d4d4d4;opacity:0.32"></div><div class="a" style="left:1415.30px;top:73.28px;width:7.80px;height:1px;background:#4fc1ff;opacity:0.32"></div><div class="a" style="left:1423.10px;top:73.28px;width:0.78px;height:1px;background:#d4d4d4;opacity:0.32"></div><div class="a" style="left:1402.04px;top:76.52px;width:2.34px;height:1px;background:#4fc1ff;opacity:0.32"></div><div class="a" style="left:1404.38px;top:76.52px;width:0.78px;height:1px;background:#d4d4d4;opacity:0.32"></div><div class="a" style="left:1405.16px;top:76.52px;width:4.68px;height:1px;background:#dcdcaa;opacity:0.32"></div><div class="a" style="left:1409.84px;top:76.52px;width:0.78px;height:1px;background:#d4d4d4;opacity:0.32"></div><div class="a" style="left:1410.62px;top:76.52px;width:3.12px;height:1px;background:#b5cea8;opacity:0.32"></div><div class="a" style="left:1413.74px;top:76.52px;width:0.78px;height:1px;background:#d4d4d4;opacity:0.32"></div><div class="a" style="left:1415.30px;top:76.52px;width:1.56px;height:1px;background:#d4d4d4;opacity:0.32"></div><div class="a" style="left:1417.64px;top:76.52px;width:1.56px;height:1px;background:#569cd6;opacity:0.32"></div><div class="a" style="left:1419.98px;top:76.52px;width:5.46px;height:1px;background:#9cdcfe;opacity:0.32"></div><div class="a" style="left:1425.44px;top:76.52px;width:0.78px;height:1px;background:#d4d4d4;opacity:0.32"></div><div class="a" style="left:1426.22px;top:76.52px;width:2.34px;height:1px;background:#dcdcaa;opacity:0.32"></div><div class="a" style="left:1428.56px;top:76.52px;width:0.78px;height:1px;background:#d4d4d4;opacity:0.32"></div><div class="a" style="left:1429.34px;top:76.52px;width:5.46px;height:1px;background:#ce9178;opacity:0.32"></div><div class="a" style="left:1435.58px;top:76.52px;width:7.02px;height:1px;background:#ce9178;opacity:0.32"></div><div class="a" style="left:1443.38px;top:76.52px;width:1.56px;height:1px;background:#ce9178;opacity:0.32"></div><div class="a" style="left:1445.72px;top:76.52px;width:3.12px;height:1px;background:#ce9178;opacity:0.32"></div><div class="a" style="left:1449.62px;top:76.52px;width:3.90px;height:1px;background:#ce9178;opacity:0.32"></div><div class="a" style="left:1453.52px;top:76.52px;width:1.56px;height:1px;background:#d4d4d4;opacity:0.32"></div><div class="a" style="left:1398.92px;top:78.14px;width:0.78px;height:1px;background:#d4d4d4;opacity:0.32"></div><div class="a" style="left:1400.48px;top:78.14px;width:3.90px;height:1px;background:#c586c0;opacity:0.32"></div><div class="a" style="left:1404.38px;top:78.14px;width:0.78px;height:1px;background:#d4d4d4;opacity:0.32"></div><div class="a" style="left:1405.16px;top:78.14px;width:2.34px;height:1px;background:#9cdcfe;opacity:0.32"></div><div class="a" style="left:1407.50px;top:78.14px;width:1.56px;height:1px;background:#d4d4d4;opacity:0.32"></div><div class="a" style="left:1402.04px;top:79.76px;width:5.46px;height:1px;background:#9cdcfe;opacity:0.32"></div><div class="a" style="left:1407.50px;top:79.76px;width:0.78px;height:1px;background:#d4d4d4;opacity:0.32"></div><div class="a" style="left:1408.28px;top:79.76px;width:2.34px;height:1px;background:#dcdcaa;opacity:0.32"></div><div class="a" style="left:1410.62px;top:79.76px;width:0.78px;height:1px;background:#d4d4d4;opacity:0.32"></div><div class="a" style="left:1411.40px;top:79.76px;width:2.34px;height:1px;background:#9cdcfe;opacity:0.32"></div><div class="a" style="left:1413.74px;top:79.76px;width:0.78px;height:1px;background:#d4d4d4;opacity:0.32"></div><div class="a" style="left:1398.92px;top:81.38px;width:0.78px;height:1px;background:#d4d4d4;opacity:0.32"></div><div class="a" style="left:1395.80px;top:83.00px;width:0.78px;height:1px;background:#d4d4d4;opacity:0.32"></div><div class="a" style="left:1395.80px;top:86.24px;width:4.68px;height:1px;background:#dcdcaa;opacity:0.32"></div><div class="a" style="left:1400.48px;top:86.24px;width:2.34px;height:1px;background:#d4d4d4;opacity:0.32"></div><div class="a" style="left:1487px;top:51px;width:14px;height:293px;background:#434345;"></div><div class="a" style="left:1487px;top:344px;width:1px;height:226px;background:#2a2a2c;"></div><div class="a" style="left:1487px;top:80px;width:14px;height:1.6px;background:#9a9a9a;"></div><div class="a" style="left:416.4px;top:558.3px;width:967px;height:11px;background:#3a3a3c;"></div><div class="a" style="left:354px;top:569px;width:1147px;height:1px;background:#333335;"></div><div class="a ui" style="left:372.8px;top:581.77px;font-size:10.6px;line-height:10.6px;color:#9a9a9a;letter-spacing:-0.4px">PROBLEMS</div><div class="a ui" style="left:447.9px;top:581.77px;font-size:10.6px;line-height:10.6px;color:#9a9a9a;letter-spacing:-0.2px">OUTPUT</div><div class="a ui" style="left:510.2px;top:581.77px;font-size:10.6px;line-height:10.6px;color:#9a9a9a;letter-spacing:-0.32px">DEBUG CONSOLE</div><div class="a ui" style="left:618.3px;top:581.77px;font-size:10.6px;line-height:10.6px;color:#e7e7e7;letter-spacing:-0.2px">TERMINAL</div><div class="a" style="left:618.3px;top:599.2px;width:52px;height:1.2px;background:#e0e0e0;"></div><div class="a" style="left:1168.6px;top:578.2px;width:162px;height:17.7px;background:#3a3a3c;border-radius:4px"></div><div class="a ui" style="left:1177.2px;top:581.47px;font-size:11px;line-height:11px;color:#e0e0e0;letter-spacing:-0.35px">1: node</div><svg class="a" style="left:1312px;top:581px;" width="12" height="10" viewBox="0 0 12 10"><path d="M1.5 2.5 L6 7 L10.5 2.5" fill="none" stroke="#d0d0d0" stroke-width="1.3"/></svg><svg class="a" style="left:1345px;top:578px;" width="16" height="16" viewBox="0 0 16 16"><path d="M8 1.5 V14.5 M1.5 8 H14.5" stroke="#c5c5c5" stroke-width="1.3"/></svg><svg class="a" style="left:1376px;top:577px;" width="17" height="17" viewBox="0 0 17 17"><g fill="none" stroke="#c5c5c5" stroke-width="1.2"><rect x="2.5" y="2.5" width="12.5" height="12.5" rx="1.5"/><path d="M8.75 2.5 V15"/></g></svg><svg class="a" style="left:1407px;top:576px;" width="14" height="18" viewBox="0 0 14 18"><g fill="none" stroke="#c5c5c5" stroke-width="1.1"><path d="M2 4.5 H12 M5 4.5 V2.5 H9 V4.5"/><path d="M3 4.5 L3.6 15.5 H10.4 L11 4.5"/><path d="M5.5 6.5 V13.5 M7 6.5 V13.5 M8.5 6.5 V13.5"/></g></svg><svg class="a" style="left:1439px;top:580px;" width="13" height="12" viewBox="0 0 13 12"><path d="M1.5 8.5 L6.5 3.5 L11.5 8.5" fill="none" stroke="#c5c5c5" stroke-width="1.3"/></svg><svg class="a" style="left:1469px;top:579px;" width="13" height="16" viewBox="0 0 13 16"><path d="M2 3 L11.5 12.5 M11.5 3 L2 12.5" stroke="#c5c5c5" stroke-width="1.3"/></svg><div class="a mono" style="left:372.2px;top:608.08px;font-size:12.4px;line-height:12.4px;letter-spacing:-0.670px;color:#d6d6d6">MongoDB connected</div><div class="a mono" style="left:372.2px;top:621.61px;font-size:12.4px;line-height:12.4px;letter-spacing:-0.670px;color:#d6d6d6">server listening on port 3000</div><div class="a mono" style="left:372.2px;top:635.14px;font-size:12.4px;line-height:12.4px;letter-spacing:-0.670px;color:#22bd77">[nodemon] restarting due to changes...</div><div class="a mono" style="left:372.2px;top:648.67px;font-size:12.4px;line-height:12.4px;letter-spacing:-0.670px;color:#22bd77">[nodemon] starting `node src/server.js`</div><div class="a mono" style="left:372.2px;top:662.20px;font-size:12.4px;line-height:12.4px;letter-spacing:-0.670px;color:#d6d6d6">MongoDB connected</div><div class="a mono" style="left:372.2px;top:675.73px;font-size:12.4px;line-height:12.4px;letter-spacing:-0.670px;color:#d6d6d6">server listening on port 3000</div><div class="a mono" style="left:372.2px;top:689.26px;font-size:12.4px;line-height:12.4px;letter-spacing:-0.670px;color:#22bd77">[nodemon] restarting due to changes...</div><div class="a mono" style="left:372.2px;top:702.79px;font-size:12.4px;line-height:12.4px;letter-spacing:-0.670px;color:#22bd77">[nodemon] starting `node src/server.js`</div><div class="a mono" style="left:372.2px;top:716.32px;font-size:12.4px;line-height:12.4px;letter-spacing:-0.670px;color:#d6d6d6">MongoDB connected</div><div class="a mono" style="left:372.2px;top:729.85px;font-size:12.4px;line-height:12.4px;letter-spacing:-0.670px;color:#d6d6d6">server listening on port 3000</div><div class="a mono" style="left:372.2px;top:743.38px;font-size:12.4px;line-height:12.4px;letter-spacing:-0.670px;color:#22bd77">[nodemon] restarting due to changes...</div><div class="a mono" style="left:372.2px;top:756.91px;font-size:12.4px;line-height:12.4px;letter-spacing:-0.670px;color:#22bd77">[nodemon] starting `node src/server.js`</div><div class="a mono" style="left:372.2px;top:770.44px;font-size:12.4px;line-height:12.4px;letter-spacing:-0.670px;color:#22bd77">[nodemon] restarting due to changes...</div><div class="a mono" style="left:372.2px;top:783.97px;font-size:12.4px;line-height:12.4px;letter-spacing:-0.670px;color:#22bd77">[nodemon] starting `node src/server.js`</div><div class="a mono" style="left:372.2px;top:797.50px;font-size:12.4px;line-height:12.4px;letter-spacing:-0.670px;color:#d6d6d6">MongoDB connected</div><div class="a mono" style="left:372.2px;top:811.03px;font-size:12.4px;line-height:12.4px;letter-spacing:-0.670px;color:#d6d6d6">server listening on port 3000</div><div class="a mono" style="left:372.2px;top:824.56px;font-size:12.4px;line-height:12.4px;letter-spacing:-0.670px;color:#22bd77">[nodemon] restarting due to changes...</div><div class="a mono" style="left:372.2px;top:838.09px;font-size:12.4px;line-height:12.4px;letter-spacing:-0.670px;color:#22bd77">[nodemon] starting `node src/server.js`</div><div class="a" style="left:372.4px;top:850.8px;width:7.6px;height:12.4px;background:transparent;border:1.3px solid #d0d0d0"></div><svg class="a" style="left:90px;top:868px;" width="14" height="16" viewBox="0 0 14 16"><g fill="none" stroke="#fff" stroke-width="1.2"><circle cx="4" cy="3.5" r="2"/><circle cx="4" cy="12.5" r="2"/><circle cx="10.5" cy="5.5" r="2"/><path d="M4 5.5 V10.5 M10.5 7.5 c0 3 -6.5 2 -6.5 3"/></g></svg><div class="a ui" style="left:106.8px;top:870.47px;font-size:12px;line-height:12px;color:#ffffff;">master*</div><svg class="a" style="left:163px;top:869px;" width="15" height="14" viewBox="0 0 15 14"><g fill="none" stroke="#fff" stroke-width="1.1"><path d="M4.5 10 H3.6 a2.6 2.6 0 0 1 -0.2 -5.2 a3.8 3.8 0 0 1 7.4 -0.4 a2.6 2.6 0 0 1 0.6 5.6 H10.5"/><path d="M7.5 13 V6.8 M5.5 8.8 L7.5 6.8 L9.5 8.8"/></g></svg><svg class="a" style="left:191px;top:868px;" width="16" height="16" viewBox="0 0 16 16"><g fill="none" stroke="#fff" stroke-width="1.2"><circle cx="7.8" cy="7.8" r="5.8"/><path d="M5.5 5.5 L10.1 10.1 M10.1 5.5 L5.5 10.1"/></g></svg><div class="a ui" style="left:208.8px;top:870.47px;font-size:12px;line-height:12px;color:#ffffff;">0</div><svg class="a" style="left:218px;top:867px;" width="15" height="16" viewBox="0 0 15 16"><g fill="none" stroke="#fff" stroke-width="1.2" stroke-linejoin="round"><path d="M7.3 2 L13.3 13.5 H1.3 Z"/><path d="M7.3 6 V10 M7.3 11.3 V12.3"/></g></svg><div class="a ui" style="left:235.4px;top:870.47px;font-size:12px;line-height:12px;color:#ffffff;">0</div><div class="a ui" style="left:1150px;top:870.77px;font-size:12.4px;line-height:12.4px;color:#ffffff;letter-spacing:-0.35px">Ln 4, Col 38</div><div class="a ui" style="left:1228.7px;top:870.77px;font-size:12.4px;line-height:12.4px;color:#ffffff;letter-spacing:-0.35px">Spaces: 4</div><div class="a ui" style="left:1296.3px;top:870.77px;font-size:12.4px;line-height:12.4px;color:#ffffff;letter-spacing:-0.35px">UTF-8</div><div class="a ui" style="left:1346px;top:870.77px;font-size:12.4px;line-height:12.4px;color:#ffffff;letter-spacing:-0.35px">LF</div><div class="a ui" style="left:1374.2px;top:870.77px;font-size:12.4px;line-height:12.4px;color:#ffffff;letter-spacing:-0.35px">JavaScript</div><svg class="a" style="left:1441px;top:866px;" width="18" height="18" viewBox="0 0 18 18"><g fill="none" stroke="#fff" stroke-width="1.1"><circle cx="7.9" cy="9.2" r="2.6"/><path d="M4.3 15.2 c0.8 -2.6 2.2 -3.4 3.6 -3.4 s2.8 0.8 3.6 3.4"/><path d="M7.5 6.2 V4.3 H15.8 V8.8 L12.6 10.3"/></g></svg><svg class="a" style="left:1472px;top:866px;" width="16" height="18" viewBox="0 0 16 18"><g fill="none" stroke="#fff" stroke-width="1.1"><path d="M3.2 13 V8.6 a4.6 4.6 0 0 1 5.2 -4.6"/><path d="M11.6 8.8 V13"/><path d="M2.3 13.4 H12.5"/><path d="M6.4 14.9 H8.4"/></g><circle cx="10.8" cy="6.4" r="2.6" fill="#fff"/></svg><svg class="a" style="left:570px;top:33px;" width="14" height="18" viewBox="0 0 14 18"><path d="M2.5 1.5 V14.2 L5.6 11.3 L7.8 16.2 L9.9 15.3 L7.8 10.5 H12 Z" fill="#111" stroke="#e8e8e8" stroke-width="1.1" stroke-linejoin="round"/></svg>
</body></html>
